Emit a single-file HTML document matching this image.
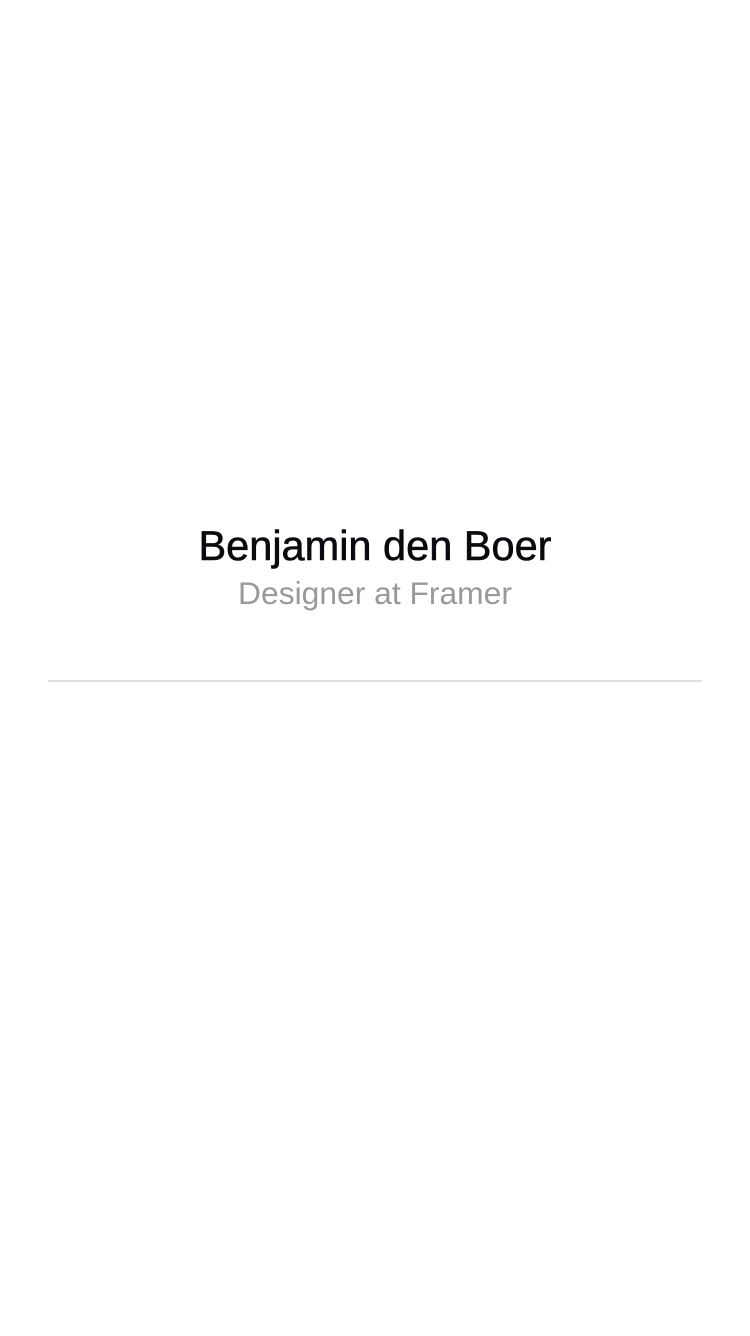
<!DOCTYPE html>
<html><head><style>
html,body{margin:0;padding:0;width:750px;height:1336px;background:#fff;overflow:hidden;font-family:"Liberation Sans",sans-serif;}
.n{position:absolute;top:522px;left:0;width:750px;text-align:center;font-size:41.5px;color:#0a0a0f;line-height:48px;-webkit-text-stroke:0.6px #0a0a0f;}
.t{position:absolute;top:575px;left:0;width:750px;text-align:center;font-size:31.8px;color:#999;line-height:36px;}
.l{position:absolute;top:680px;left:48px;width:654px;height:2px;background:#e0e0e0;}
</style></head><body>
<div class="n">Benjamin den Boer</div>
<div class="t">Designer at Framer</div>
<div class="l"></div>
</body></html>
